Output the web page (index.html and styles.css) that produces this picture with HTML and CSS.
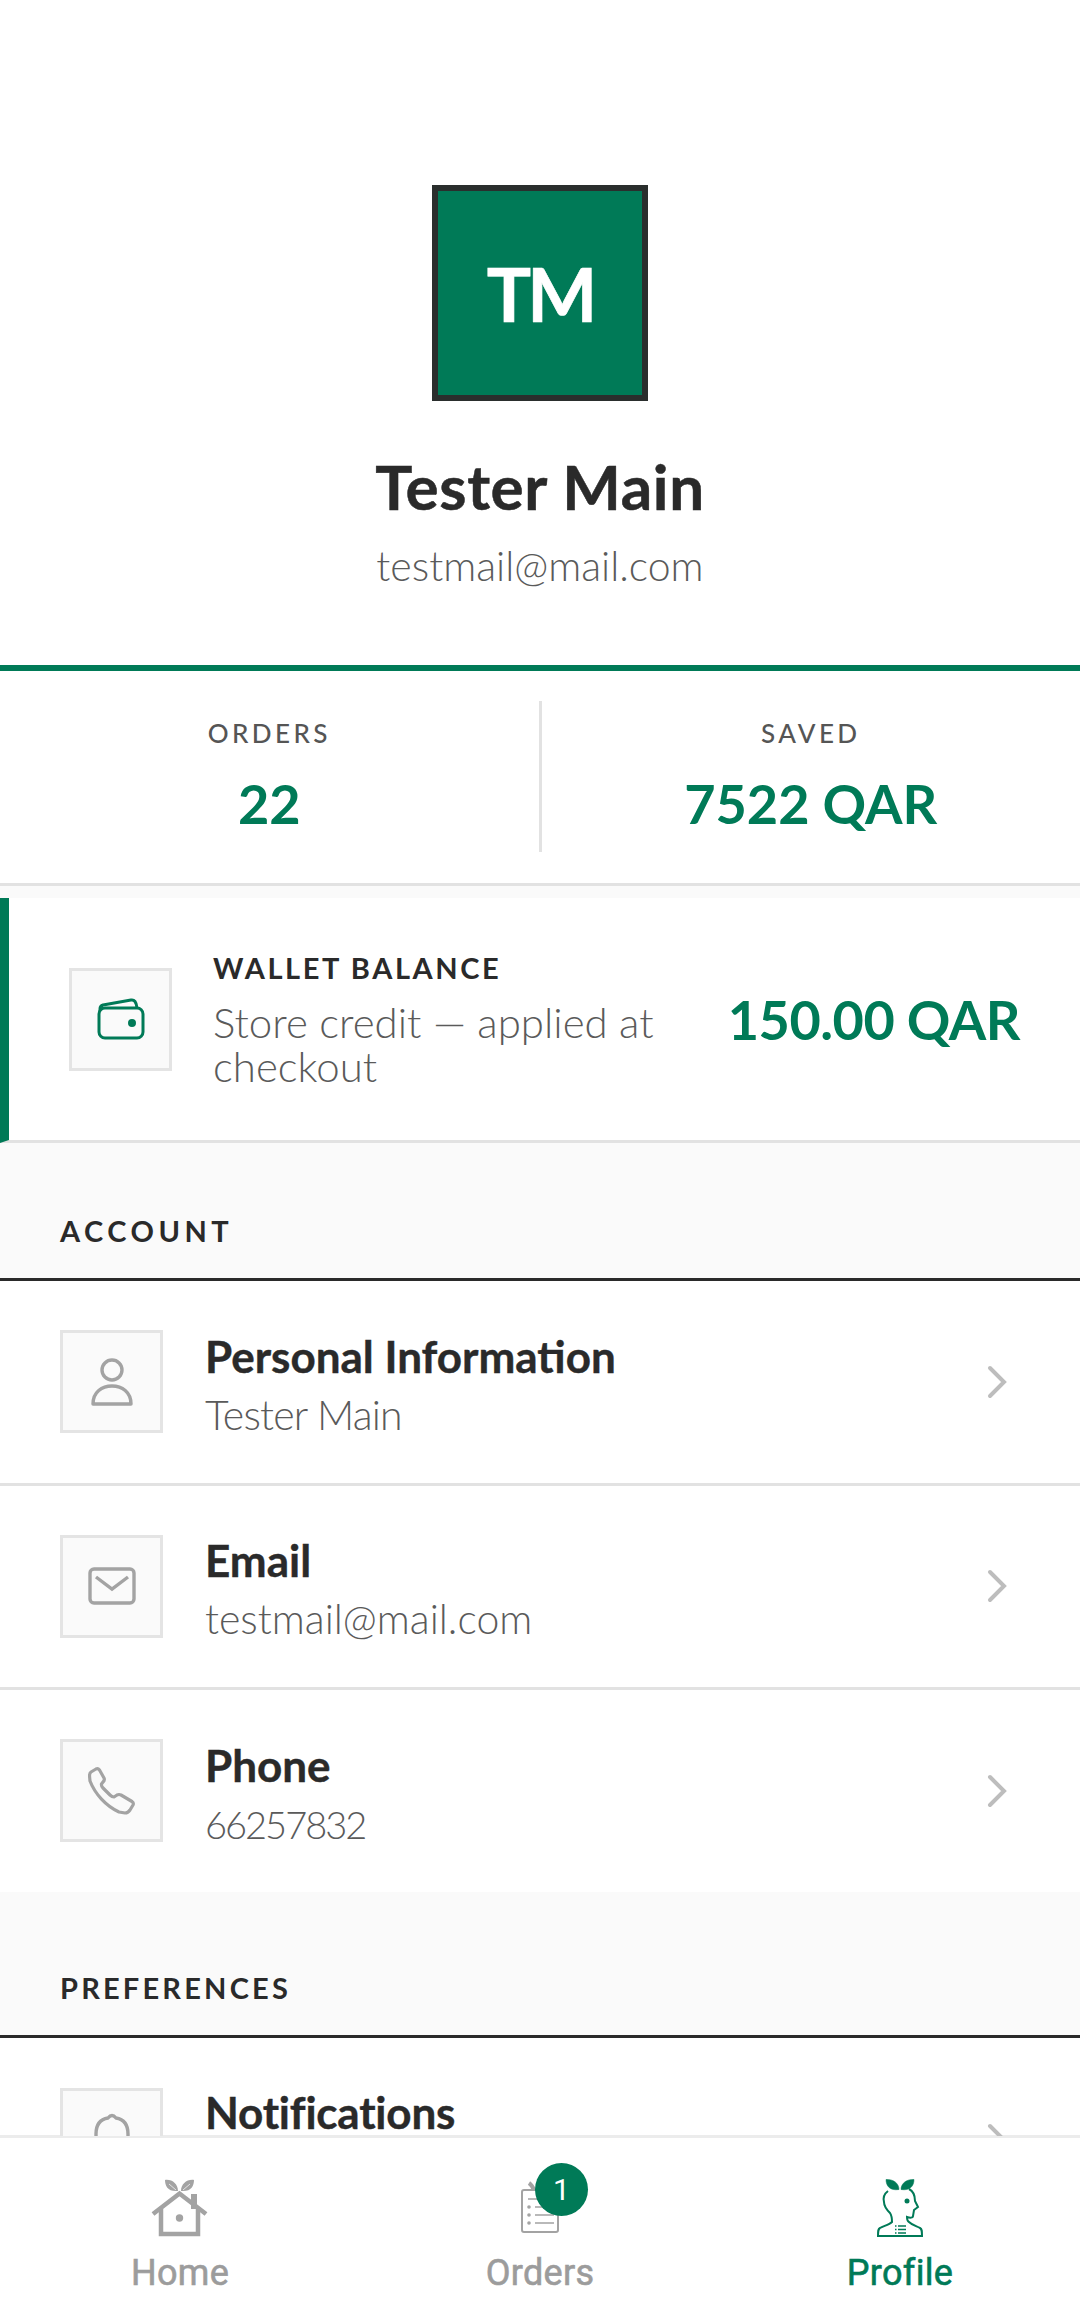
FILE: index.html
```html
<!DOCTYPE html>
<html>
<head>
  <link rel="stylesheet" href="styles.css">
</head>
<body>
  <div class="screen">
    <div class="profile-head">
      <div class="avatar">TM</div>
      <div class="name">Tester Main</div>
      <div class="mail">testmail@mail.com</div>
    </div>

    <div class="stats">
      <div class="stat">
        <div class="stat-label">ORDERS</div>
        <div class="stat-value">22</div>
      </div>
      <div class="stat stat-right">
        <div class="stat-label">SAVED</div>
        <div class="stat-value">7522 QAR</div>
      </div>
    </div>

    <div class="wallet">
      <div class="icon-box">
        <svg width="48" height="42" viewBox="0 0 48 42" fill="none" stroke="#007a57" stroke-width="3">
          <path d="M3 13 v-2 q0-3 3-4 l28-5 q5-1 6 8" stroke-linejoin="round"/>
          <rect x="2" y="10" width="44" height="30" rx="6"/>
          <circle cx="35" cy="25" r="2.5" fill="#007a57"/>
        </svg>
      </div>
      <div class="wallet-text">
        <div class="wallet-title">WALLET BALANCE</div>
        <div class="wallet-sub">Store credit — applied at checkout</div>
      </div>
      <div class="wallet-amount">150.00 QAR</div>
    </div>

    <div class="section-title section-account">ACCOUNT</div>
    <div class="row">
      <div class="icon-box">
        <svg width="44" height="48" viewBox="0 0 44 48" fill="none" stroke="#a3a3a3" stroke-width="3.4">
          <circle cx="22" cy="12" r="10"/>
          <path d="M3 46 C3 34 12 28 22 28 C32 28 41 34 41 46 Z" stroke-linejoin="round"/>
        </svg>
      </div>
      <div class="row-text">
        <div class="row-title">Personal Information</div>
        <div class="row-sub row-sub-tight">Tester Main</div>
      </div>
      <svg class="chevron" width="22" height="34" viewBox="0 0 22 34" fill="none" stroke="#bdbdbd" stroke-width="4" stroke-linecap="round"><path d="M3 3 L17 17 L3 31"/></svg>
    </div>
    <div class="row">
      <div class="icon-box">
        <svg width="48" height="38" viewBox="0 0 48 38" fill="none" stroke="#a3a3a3" stroke-width="3.4">
          <rect x="2" y="2" width="44" height="34" rx="4"/>
          <path d="M8 10 l16 12 l16-12"/>
        </svg>
      </div>
      <div class="row-text">
        <div class="row-title">Email</div>
        <div class="row-sub">testmail@mail.com</div>
      </div>
      <svg class="chevron" width="22" height="34" viewBox="0 0 22 34" fill="none" stroke="#bdbdbd" stroke-width="4" stroke-linecap="round"><path d="M3 3 L17 17 L3 31"/></svg>
    </div>
    <div class="row row-last">
      <div class="icon-box">
        <svg width="48" height="48" viewBox="0 0 48 48" fill="none" stroke="#a3a3a3" stroke-width="3.2" stroke-linejoin="round">
          <path d="M3 5 L8 2 Q10 1 11.5 3 L16 11 Q17 13 15 15 L13.5 17 Q13 19 15 21 L22 28 Q24 30 26 30 L29 28 Q31 27 33 28 L44 34.5 Q46 36 45 38 L42 43 Q40 46 37 46 L31 45 C18 39 7 27 2 14 L1.5 9 Q1.5 6 3 5 Z"/>
        </svg>
      </div>
      <div class="row-text">
        <div class="row-title">Phone</div>
        <div class="row-sub row-sub-digits">66257832</div>
      </div>
      <svg class="chevron" width="22" height="34" viewBox="0 0 22 34" fill="none" stroke="#bdbdbd" stroke-width="4" stroke-linecap="round"><path d="M3 3 L17 17 L3 31"/></svg>
    </div>

    <div class="section-title section-prefs">PREFERENCES</div>
    <!-- only the top of this row shows above the nav -->
    <div class="row row-cut">
      <div class="icon-box">
        <svg width="44" height="54" viewBox="0 0 44 54" fill="none" stroke="#a3a3a3" stroke-width="3.4">
          <path d="M6 38 v-16 q0-14 12-16 q4-5 8 0 q12 2 12 16 v16 l4 6 h-40 z" stroke-linejoin="round"/>
        </svg>
      </div>
      <div class="row-text">
        <div class="row-title">Notifications</div>
      </div>
      <svg class="chevron" width="22" height="13" viewBox="0 0 22 13" fill="none" stroke="#bdbdbd" stroke-width="4" stroke-linecap="round"><path d="M3 3 L17 17 L3 31"/></svg>
    </div>
  </div>

  <div class="nav">
    <div class="nav-item">
      <div class="nav-icon">
        <svg width="58" height="58" viewBox="0 0 58 58">
          <path d="M27 12 C17 13 14 7 14 1 C21 0 27 5 27 12 Z M30 12 C40 13 43 7 43 1 C36 0 30 5 30 12 Z" fill="#a3a3a3"/>
          <path d="M18 5 L25 11 M39 5 L32 11" stroke="#fff" stroke-width="0.7"/>
          <path d="M2 35 L28.5 14.5 L55 35" fill="none" stroke="#a3a3a3" stroke-width="4.5"/>
          <path d="M40 15 h6 v15 h-6 z" fill="#a3a3a3"/>
          <path d="M10 30 v25 h37 v-25" fill="none" stroke="#a3a3a3" stroke-width="4.5"/>
          <circle cx="28.5" cy="39" r="3.7" fill="#a3a3a3"/>
        </svg>
      </div>
      <div class="nav-label">Home</div>
    </div>
    <div class="nav-item">
      <div class="nav-icon">
        <svg width="40" height="54" viewBox="0 0 40 54" fill="none" stroke="#a3a3a3" stroke-width="1.6">
          <path d="M9 4 q3 2 5 7" stroke-width="4"/>
          <rect x="2" y="11" width="36" height="42" rx="2" stroke-width="2"/>
          <path d="M8 20 h26 M15 28 h19 M15 36 h19 M15 44 h19"/>
          <circle cx="9" cy="28" r="1.8" fill="#a3a3a3" stroke="none"/>
          <circle cx="9" cy="36" r="1.8" fill="#a3a3a3" stroke="none"/>
          <circle cx="9" cy="44" r="1.8" fill="#a3a3a3" stroke="none"/>
        </svg>
        <span class="badge">1</span>
      </div>
      <div class="nav-label">Orders</div>
    </div>
    <div class="nav-item nav-active">
      <div class="nav-icon">
        <svg width="46" height="58" viewBox="0 0 46 58" fill="none" stroke="#007a57" stroke-width="2">
          <path d="M22 10.5 C13 12 9 7 9 0.5 C16 0 22 4 22 10.5 Z M24 10.5 C33 12 37 7 37 0.5 C30 0 24 4 24 10.5 Z" fill="#007a57" stroke-width="0.5"/>
          <path d="M11 12 C7 15 6 19 7 23 C7 28 10 31 13 34 C15 37 15 40 15 43 C12 46 6 47 3 49 C1 50 1 52 1 57 H45 C45 52 45 50 43 49 C39 47 35 46 32 43 C30 42 30 40 30 38 C33 39 36 39 36 37 L37 31 L41 28 L38 22 C38 16 36 12 32 10"/>
          <circle cx="30" cy="22" r="2.5" fill="#007a57" stroke="none"/>
          <path d="M21 47 h8 M21 50.5 h8 M21 54 h8" stroke-width="1.4"/>
          <path d="M18 47 h1.5 M18 50.5 h1.5 M18 54 h1.5" stroke-width="1.4"/>
        </svg>
      </div>
      <div class="nav-label">Profile</div>
    </div>
  </div>
</body>
</html>
```

FILE: styles.css
```css
* {
  box-sizing: border-box;
}
html, body {
  margin: 0;
  padding: 0;
  height: 2315px;
  overflow: hidden;
}
body {
  background: #fff;
  font-family: "Lato", "Liberation Sans", sans-serif;
  color: #2a2a2a;
}
.screen {
  height: 2135px;
  background: #fafafa;
}

/* header */
.profile-head {
  height: 671px;
  padding-top: 185px;
  background: #fff;
  border-bottom: 6px solid #007a57;
  text-align: center;
}
.avatar {
  width: 216px;
  height: 216px;
  margin: 0 auto;
  border: 6px solid #2a2e2d;
  background: #007a57;
  color: #fff;
  font-size: 74px;
  font-weight: 700;
  line-height: 206px;
  letter-spacing: -4px;
  -webkit-text-stroke: 0.6px #fff;
}
.name {
  margin-top: 49px;
  font-size: 62px;
  font-weight: 700;
  line-height: 72px;
  letter-spacing: 0.6px;
  -webkit-text-stroke: 0.5px #2a2a2a;
}
.mail {
  margin-top: 21px;
  font-size: 41px;
  font-weight: 300;
  line-height: 46px;
  color: #5a5a5a;
}

/* stats */
.stats {
  display: flex;
  align-items: center;
  height: 215px;
  background: #fff;
  border-bottom: 3px solid #e2e2e2;
}
.stat {
  flex: 1;
  height: 151px;
  margin-top: -2px;
  text-align: center;
}
.stat-right {
  border-left: 3px solid #e2e2e2;
}
.stat-label {
  margin-top: 16px;
  font-size: 26px;
  font-weight: 500;
  line-height: 32px;
  letter-spacing: 3.4px;
  color: #555;
}
.stat-value {
  margin-top: 23px;
  font-size: 54px;
  font-weight: 700;
  line-height: 64px;
  color: #007a57;
}

/* wallet */
.wallet {
  display: flex;
  align-items: center;
  height: 245px;
  margin-top: 12px;
  padding: 0 60px;
  background: #fff;
  border-left: 9px solid #007a57;
  border-bottom: 3px solid #e2e2e2;
}
.icon-box {
  display: flex;
  align-items: center;
  justify-content: center;
  flex: none;
  width: 103px;
  height: 103px;
  background: #fafafa;
  border: 3px solid #e4e4e4;
}
.wallet-text {
  flex: 1;
  margin-left: 41px;
}
.wallet-title {
  font-size: 29px;
  font-weight: 700;
  line-height: 36px;
  letter-spacing: 2.6px;
}
.wallet-sub {
  margin-top: 14px;
  font-size: 42px;
  font-weight: 300;
  line-height: 44px;
  color: #5a5a5a;
}
.wallet-amount {
  flex: none;
  margin-left: 40px;
  font-size: 54px;
  font-weight: 700;
  letter-spacing: -0.5px;
  color: #007a57;
}

/* sections */
.section-title {
  padding-left: 60px;
  font-size: 29px;
  font-weight: 700;
  line-height: 36px;
  border-bottom: 3px solid #2a2a2a;
}
.section-account {
  height: 138px;
  padding-top: 70px;
  letter-spacing: 4.5px;
}
.section-prefs {
  height: 146px;
  padding-top: 78px;
  letter-spacing: 3.2px;
}

/* rows */
.row {
  display: flex;
  align-items: center;
  height: 204.6px;
  padding: 0 71px 0 60px;
  background: #fff;
  border-bottom: 3px solid #e2e2e2;
}
.row-last {
  height: 201.6px;
  border-bottom: 0;
}
.row-text {
  flex: 1;
  margin-left: 42px;
  padding-top: 4px;
}
.row-title {
  font-size: 44px;
  font-weight: 700;
  line-height: 52px;
  -webkit-text-stroke: 0.4px #2a2a2a;
}
.row-sub {
  margin-top: 10px;
  font-size: 41px;
  font-weight: 300;
  line-height: 46px;
  color: #5a5a5a;
}
.row-sub-tight {
  letter-spacing: -0.8px;
}
.row-sub-digits {
  font-size: 38px;
  letter-spacing: -2px;
}

/* row that stops at the nav */
.row-cut {
  align-items: flex-start;
  height: 98px;
  padding-top: 50px;
  border-bottom: 0;
}
.row-cut .icon-box {
  align-items: flex-start;
  height: 48px;
  border-bottom: 0;
  overflow: hidden;
}
.row-cut .icon-box svg {
  margin-top: 21px;
}
.row-cut .row-text {
  margin-top: 4px;
  padding-top: 0;
}
.row-cut .row-title {
  line-height: 40px;
  letter-spacing: -0.2px;
}
.row-cut .chevron {
  margin-top: 35px;
}

/* bottom nav */
.nav {
  display: flex;
  height: 180px;
  background: #fff;
  border-top: 3px solid #ececec;
}
.nav-item {
  flex: 1;
  text-align: center;
}
.nav-icon {
  position: relative;
  display: inline-block;
  height: 58px;
  margin-top: 41px;
}
.nav-icon svg {
  display: block;
}
.nav-label {
  margin-top: 11px;
  font-family: "Roboto", sans-serif;
  font-size: 36px;
  font-weight: 400;
  line-height: 44px;
  letter-spacing: 0.3px;
  color: #9c9c9c;
  -webkit-text-stroke: 0.6px #9c9c9c;
}
.nav-active .nav-label {
  color: #007a57;
  -webkit-text-stroke: 0.6px #007a57;
}
.badge {
  position: absolute;
  top: -16px;
  left: 15px;
  width: 53px;
  height: 53px;
  border-radius: 50%;
  background: #007a57;
  color: #fff;
  font-family: "Roboto", sans-serif;
  font-size: 30px;
  line-height: 53px;
}
```
